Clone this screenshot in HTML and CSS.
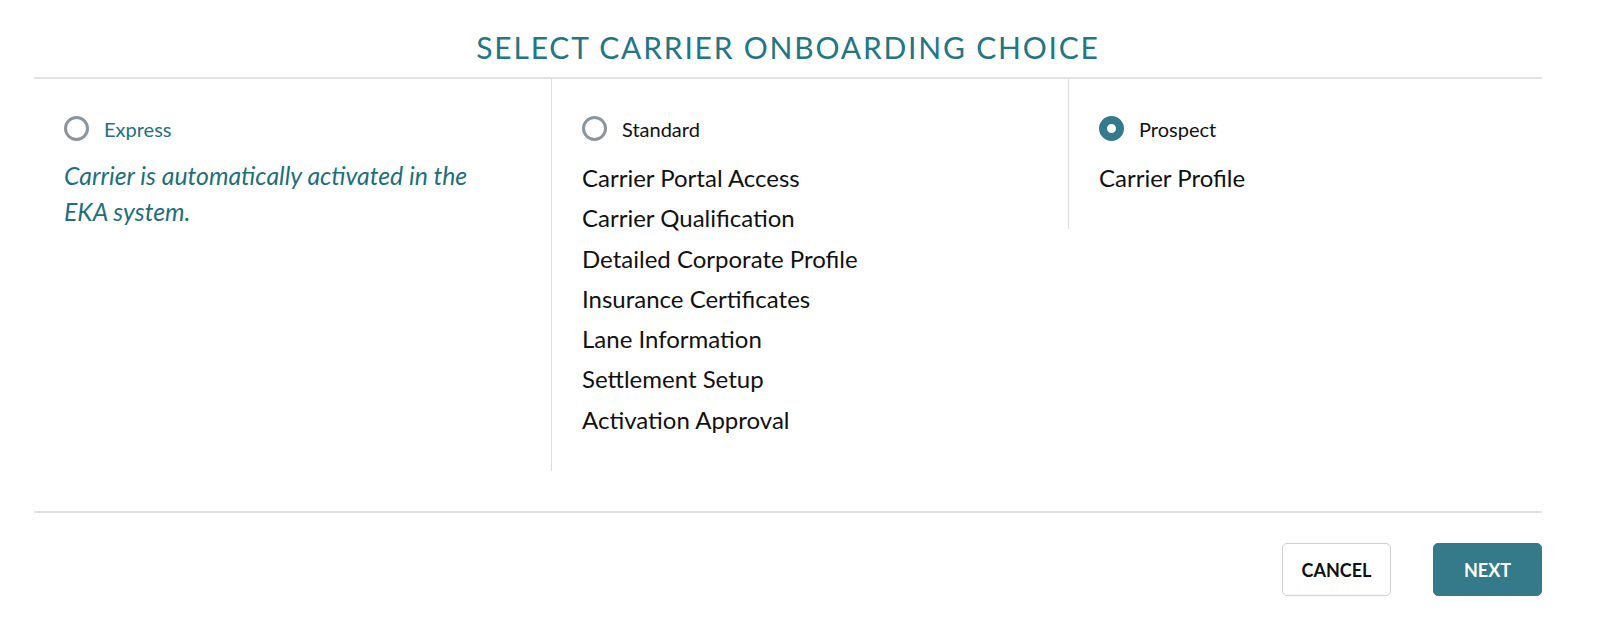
FILE: index.html
```html
<!DOCTYPE html>
<html lang="en">
<head>
<meta charset="utf-8">
<title>Select Carrier Onboarding Choice</title>
<link rel="stylesheet" href="styles.css">
</head>
<body>
<div class="dialog">
  <h1 class="title">SELECT CARRIER ONBOARDING CHOICE</h1>
  <div class="options-wrap">
    <div class="options">
      <div class="option">
        <label class="choice">
          <span class="radio"></span>
          <span class="choice-label accent">Express</span>
        </label>
        <p class="desc">Carrier is automatically activated in the EKA system.</p>
      </div>
      <div class="option bordered">
        <label class="choice">
          <span class="radio"></span>
          <span class="choice-label">Standard</span>
        </label>
        <ul class="steps">
          <li>Carrier Portal Access</li>
          <li>Carrier Qualification</li>
          <li>Detailed Corporate Profile</li>
          <li>Insurance Certificates</li>
          <li>Lane Information</li>
          <li>Settlement Setup</li>
          <li>Activation Approval</li>
        </ul>
      </div>
      <div class="option bordered">
        <label class="choice">
          <span class="radio checked"></span>
          <span class="choice-label">Prospect</span>
        </label>
        <ul class="steps">
          <li>Carrier Profile</li>
        </ul>
      </div>
    </div>
  </div>
  <div class="footer">
    <button class="btn btn-cancel">CANCEL</button>
    <button class="btn btn-next">NEXT</button>
  </div>
</div>
</body>
</html>
```

FILE: styles.css
```css
* { box-sizing: border-box; }
html, body {
  margin: 0;
  padding: 0;
  background: #ffffff;
}
body {
  font-family: Lato, "Open Sans", "Liberation Sans", sans-serif;
  color: #111111;
}
.dialog {
  width: 1600px;
  padding: 0 58px 0 34px;
}
.title {
  margin: 0;
  padding: 29px 0 12px;
  font-size: 30px;
  line-height: 36px;
  font-weight: 400;
  letter-spacing: 1.8px;
  text-align: center;
  color: #227686;
}
.options-wrap {
  border-top: 2px solid #e2e2e2;
}
.options {
  display: grid;
  grid-template-columns: repeat(3, 517px);
  align-items: start;
}
.option {
  padding: 37px 30px 31px 30px;
}
.option.bordered {
  border-left: 1px solid #dcdcdc;
}
.choice {
  display: flex;
  align-items: center;
  gap: 15px;
  height: 25px;
}
.radio {
  width: 25px;
  height: 25px;
  border-radius: 50%;
  border: 3px solid #8b959d;
  flex: none;
  background: #ffffff;
}
.radio.checked {
  border: 8px solid #337b8b;
  background: #ffffff;
}
.choice-label {
  font-size: 20px;
  color: #111111;
}
.choice-label.accent {
  color: #22727f;
}
.desc {
  margin: 17px 0 0;
  font-size: 24.8px;
  line-height: 36px;
  font-style: italic;
  color: #1e6f7c;
  max-width: 420px;
}
.steps {
  list-style: none;
  margin: 17px 0 0;
  padding: 0;
  font-size: 24px;
  line-height: 40.3px;
  color: #111111;
}
.footer {
  margin-top: 40px;
  border-top: 2px solid #e2e2e2;
  padding-top: 30px;
  display: flex;
  justify-content: flex-end;
  gap: 42px;
}
.btn {
  width: 109px;
  height: 53px;
  border-radius: 5px;
  font-family: Lato, "Open Sans", "Liberation Sans", sans-serif;
  font-size: 18px;
  font-weight: 700;
  cursor: pointer;
}
.btn-cancel {
  background: #ffffff;
  border: 1px solid #cfcfcf;
  color: #111111;
}
.btn-next {
  background: #347a8a;
  border: 1px solid #347a8a;
  color: #ffffff;
}
```
